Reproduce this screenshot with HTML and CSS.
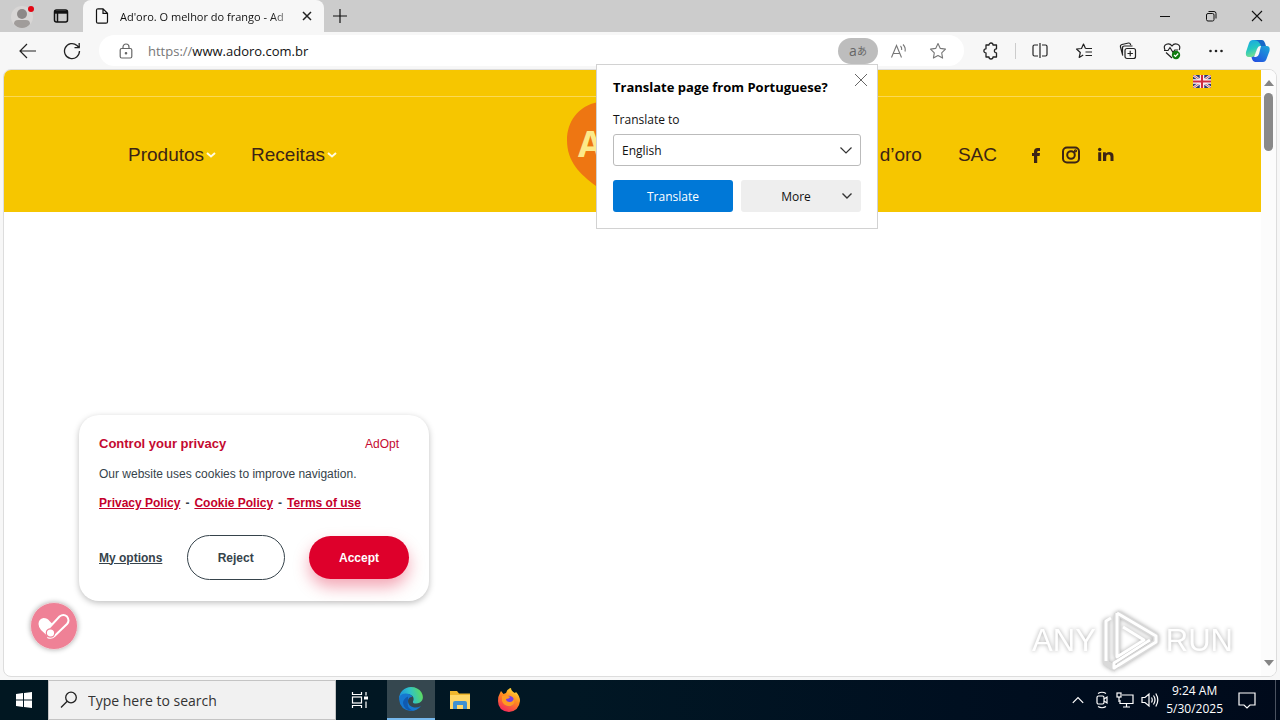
FILE: index.html
```html
<!DOCTYPE html>
<html lang="en">
<head>
<meta charset="utf-8">
<title>Ad'oro. O melhor do frango</title>
<link rel="stylesheet" href="styles.css">
</head>
<body>
<div class="browser">
<header class="tabs">
  <button class="tab-tool profile" aria-label="Profile">
    <svg width="24" height="26" viewBox="0 0 24 26"><circle cx="12" cy="14" r="11" fill="#d8d6d5"/><circle cx="12" cy="11" r="5" fill="#8d8988"/><path d="M4 21q0-4 4-4h8q4 0 4 4q-3 4-8 4t-8-4z" fill="#a09c9a"/><circle cx="21" cy="6" r="3" fill="#e30613"/></svg>
  </button>
  <button class="tab-tool" aria-label="Tab actions">
    <svg width="16" height="16" viewBox="0 0 16 16" fill="none" stroke="#111" stroke-width="1.5"><rect x="1.5" y="2" width="13" height="12" rx="2"/><path d="M1.5 4.2h13" stroke-width="3"/><path d="M4.5 5v9"/></svg>
  </button>
  <div class="tab">
    <svg width="14" height="16" viewBox="0 0 14 16" fill="none" stroke="#111" stroke-width="1.2"><path d="M3 .8h5l4.500 4.500v8.400q0 1.500-1.500 1.500H3q-1.500 0-1.500-1.500V2.300Q1.500.8 3 .8zM8 .8v4.500h4.500"/></svg>
    <span class="tab-title">Ad'oro. O melhor do frango - Ad</span>
    <button class="plain" aria-label="Close tab"><svg width="10" height="10" viewBox="0 0 10 10" stroke="#222" stroke-width="1.5"><path d="M1 1l8 8M9 1L1 9"/></svg></button>
  </div>
  <button class="plain new-tab" aria-label="New tab"><svg width="14" height="14" viewBox="0 0 14 14" stroke="#111" stroke-width="1.2"><path d="M7 0v14M0 7h14"/></svg></button>
  <div class="window-buttons">
    <button aria-label="Minimize"><svg width="12" height="12" viewBox="0 0 12 12" stroke="#111"><path d="M1 6.500h10"/></svg></button>
    <button aria-label="Restore"><svg width="12" height="12" viewBox="0 0 12 12" fill="none" stroke="#111"><rect x="1.500" y="3.500" width="7.500" height="7.500" rx="1.500"/><path d="M3.500 1.500h5.500q2 0 2 2v5"/></svg></button>
    <button aria-label="Close"><svg width="12" height="12" viewBox="0 0 12 12" stroke="#111" stroke-width="1.1"><path d="M1 1l10 10M11 1L1 11"/></svg></button>
  </div>
</header>

<div class="toolbar">
  <button class="plain back" aria-label="Back"><svg width="18" height="16" viewBox="0 0 18 16" fill="none" stroke="#222" stroke-width="1.2"><path d="M8 1L1 8l7 7M1 8h16"/></svg></button>
  <button class="plain" aria-label="Refresh"><svg width="18" height="18" viewBox="0 0 18 18" fill="none" stroke="#222" stroke-width="1.3"><path d="M16.500 9A7.500 7.500 0 1 1 14 3.500l2 2M16.200 1v4.700h-4.700"/></svg></button>
  <div class="address">
    <svg width="14" height="16" viewBox="0 0 14 16" fill="none" stroke="#666" stroke-width="1.2"><rect x="1.200" y="5.500" width="11.600" height="9.500" rx="1.500"/><path d="M4 5.500V4a3 3 0 0 1 6 0v1.500"/><circle cx="7" cy="10.200" r=".7" fill="#666"/></svg>
    <span class="url"><span class="scheme">https://</span>www.adoro.com.br</span>
    <button class="translate-pill" aria-label="Translate page"><span>a</span><span class="kana">あ</span></button>
    <button class="plain" aria-label="Read aloud"><svg width="18" height="18" viewBox="0 0 18 18" fill="none" stroke="#777" stroke-width="1.1"><path d="M1.500 15.500L6.500 3.500l5 12M3.300 11.500h6.500M10.500 4q1.500 1.500 1.200 4M13 2.500q3 3 2 7"/></svg></button>
    <button class="plain star" aria-label="Add to favorites"><svg width="18" height="18" viewBox="0 0 18 18" fill="none" stroke="#777" stroke-width="1.100" stroke-linejoin="round"><path d="M9 1.500l2.300 4.900 5.200.7-3.800 3.700.9 5.300L9 13.600l-4.600 2.500.9-5.300L1.500 7.100l5.200-.7z"/></svg></button>
  </div>
  <div class="tools">
    <button aria-label="Extensions"><svg width="18" height="18" viewBox="0 0 18 18" fill="none" stroke="#222" stroke-width="1.300" stroke-linejoin="round"><path d="M4 3h3a2 2 0 0 1 4 0h3.500v3.800a2 2 0 0 0 0 4.200v4H11a2 2 0 0 1-4 0H4v-4a2.100 2.100 0 0 1 0-4.200z"/></svg></button>
    <i class="rule"></i>
    <button aria-label="Split screen"><svg width="18" height="18" viewBox="0 0 18 18" fill="none" stroke="#222" stroke-width="1.200"><path d="M7 3H3.500Q2 3 2 4.500v8Q2 14 3.500 14H7M11 3h3.500Q16 3 16 4.500v8q0 1.500-1.500 1.500H11M9 1v15"/></svg></button>
    <button aria-label="Favorites"><svg width="18" height="18" viewBox="0 0 18 18" fill="none" stroke="#222" stroke-width="1.200" stroke-linejoin="round"><path d="M10.500 6.500L8.500 2 6.500 6.500l-5 .5 3.800 3.500-1.100 5 4-2.400M10.500 6.500H17M10.500 10H17M10.500 13.500H17"/></svg></button>
    <button aria-label="Collections"><svg width="18" height="18" viewBox="0 0 18 18" fill="none" stroke="#222" stroke-width="1.200"><rect x="6" y="6.500" width="10.500" height="10" rx="2"/><path d="M11.200 8.800v5.400M8.500 11.500h5.400M3.500 12.500L1.500 5q-.5-2 1.500-2.500l6.500-1.500q1.700-.2 2 1.500l.2.500M4 13.500q-1-1-.5-2.500V6q0-2 2-2h8"/></svg></button>
    <button aria-label="Browser essentials"><svg width="18" height="18" viewBox="0 0 18 18" fill="none" stroke="#222" stroke-width="1.200"><path d="M2 8Q0 3.500 3.500 2.200 7 1 9 4q2-3 5.500-1.800Q18 3.500 16.200 8M3 10.500l6 5.500M1 8.500h4L7 5.500l3 5 1.800-2.500H15"/><circle cx="13" cy="13" r="4.200" fill="#107c10" stroke="none"/><path d="M11 13l1.500 1.500 2.700-3" stroke="#fff"/></svg></button>
    <button aria-label="Settings and more"><svg width="18" height="18" viewBox="0 0 18 18" fill="#222"><circle cx="3.500" cy="9" r="1.300"/><circle cx="9" cy="9" r="1.300"/><circle cx="14.500" cy="9" r="1.300"/></svg></button>
    <button aria-label="Copilot"><svg width="26" height="24" viewBox="0 0 26 24"><defs><linearGradient id="cpA" x1="0" y1="0" x2=".4" y2="1"><stop offset="0" stop-color="#1aa2e8"/><stop offset=".55" stop-color="#25c8c0"/><stop offset="1" stop-color="#7fe08a"/></linearGradient><linearGradient id="cpB" x1="1" y1="0" x2=".2" y2="1"><stop offset="0" stop-color="#1ba8d8"/><stop offset="1" stop-color="#2350e0"/></linearGradient></defs><path d="M8 1h8q2 0 3 3l1 3h-4q-2 0-3 3l-2 6q-1 2-4 2H4q-4 0-3-5L4 4q1-3 4-3z" fill="url(#cpA)"/><path d="M9 1h8q2 0 3 3l1 3h-5q-2-6-7-6z" fill="#1768c8"/><path d="M18 23h-8q-2 0-3-3l-.500-2q3 0 4-3l2-6q1-2 4-2h5q4 0 3 5l-3 8q-1 3-3.500 3z" fill="url(#cpB)"/><path d="M16 7h-1q-2 0-3 3l-3 8h2q2 0 3-3z" fill="#f7f7f7"/></svg></button>
  </div>
</div>

<div class="frame">
  <main class="page">
    <div class="topbar">
      <svg width="18" height="13" viewBox="0 0 18 13" role="img" aria-label="English"><rect width="18" height="13" fill="#30386f"/><path d="M0 0l18 13M18 0L0 13" stroke="#eee" stroke-width="2.500"/><path d="M0 0l18 13M18 0L0 13" stroke="#c8374a" stroke-width=".8"/><path d="M9 0v13M0 6.500h18" stroke="#fff" stroke-width="4.500"/><path d="M9 0v13M0 6.500h18" stroke="#cf2b40" stroke-width="2.200"/></svg>
    </div>
    <nav class="nav">
      <div class="nav-left">
        <a href="#">Produtos<svg width="10" height="6" viewBox="0 0 10 6" fill="none" stroke="#fffbe0" stroke-width="2"><path d="M1 1l4 3.500L9 1"/></svg></a>
        <a href="#">Receitas<svg width="10" height="6" viewBox="0 0 10 6" fill="none" stroke="#fffbe0" stroke-width="2"><path d="M1 1l4 3.500L9 1"/></svg></a>
      </div>
      <svg class="brand" width="132" height="106" viewBox="0 0 132 106"><path d="M31 0C11 4 0 20 0 38C0 60 13 72 29 84Q48 96 66 106Q84 96 103 84C119 72 132 60 132 38C132 20 121 4 101 0Q66 -8 31 0z" fill="#ee7612"/><text x="11" y="55" class="brand-text">A</text></svg>
      <div class="nav-right">
        <a href="#">d’oro</a>
        <a href="#">SAC</a>
        <div class="social">
          <a href="#" aria-label="Facebook"><svg width="20" height="20" viewBox="0 0 20 20" fill="#3c2415"><path d="M8 18v-7H6V8h2V6.500Q8 3 11.500 3H14v2.900h-1.600q-1.200 0-1.200 1.200V8H14l-.4 3h-2.400v7z"/></svg></a>
          <a href="#" aria-label="Instagram"><svg width="20" height="20" viewBox="0 0 20 20" fill="none" stroke="#3c2415" stroke-width="2"><rect x="2" y="2.500" width="16" height="15" rx="4"/><circle cx="10" cy="10" r="3.800"/><circle cx="14.500" cy="5.800" r=".6"/></svg></a>
          <a href="#" aria-label="LinkedIn"><svg width="20" height="20" viewBox="0 0 20 20" fill="#3c2415"><circle cx="3.700" cy="4.500" r="1.700"/><path d="M2.200 7.300h3V16h-3zM7 7.300h2.800v1.200Q10.800 7 13 7q4.500 0 4.500 4.200V16h-3v-4.200q0-2.200-2-2.200-2.300 0-2.300 2.400v4H7z"/></svg></a>
        </div>
      </div>
    </nav>

    <section class="consent">
      <div class="consent-head"><h2>Control your privacy</h2><span>AdOpt</span></div>
      <p>Our website uses cookies to improve navigation.</p>
      <div class="policies"><a href="#">Privacy Policy</a><span>-</span><a href="#">Cookie Policy</a><span>-</span><a href="#">Terms of use</a></div>
      <div class="consent-actions"><a href="#">My options</a><button class="reject">Reject</button><button class="accept">Accept</button></div>
    </section>
    <button class="consent-badge" aria-label="Cookie preferences"><svg width="34" height="30" viewBox="0 0 34 30"><path d="M1.500 13q0-5 5-6 4 0 6 3l3 3-5 12L4 19q-2.500-3-2.500-6z" fill="#fff"/><path d="M9.500 19.500L22.500 5.500q4-3 7.500 0 3 4 0 7.500L17.500 25q-3 3-7 1" fill="#ef8196" stroke="#fff" stroke-width="2"/><circle cx="13.500" cy="22" r="4.200" fill="#fff" stroke="#ef8196" stroke-width="1.200"/></svg></button>

    <div class="watermark"><span>ANY</span>
      <svg width="62" height="64" viewBox="0 0 62 64" fill="none" stroke-linejoin="round"><g stroke="#d9d9d9" stroke-width="6"><path d="M17 4v44M17 4l39 23v6L18 57M6 11v43l10 6"/></g><g stroke="#fff" stroke-width="3"><path d="M17 4v44l27-17L23 18M17 4l39 23v6L14 59v-5L50 31M11 9l-5 3v40"/></g></svg>
      <span>RUN</span></div>
  </main>
  <div class="scrollbar" aria-hidden="true">
    <svg width="10" height="6" viewBox="0 0 10 6" fill="#858585"><path d="M5 0l5 6H0z"/></svg>
    <div class="thumb"></div>
    <svg class="down" width="10" height="6" viewBox="0 0 10 6" fill="#858585"><path d="M0 0h10L5 6z"/></svg>
  </div>
</div>

<section class="translate" aria-label="Translate">
  <button class="plain dismiss" aria-label="Close"><svg width="14" height="14" viewBox="0 0 14 14" stroke="#666"><path d="M1 1l12 12M13 1L1 13"/></svg></button>
  <h1>Translate page from Portuguese?</h1>
  <label for="lang">Translate to</label>
  <div class="select-wrap"><select id="lang"><option>English</option></select><svg width="12" height="7" viewBox="0 0 12 7" fill="none" stroke="#333" stroke-width="1.200"><path d="M.5.5L6 6 11.500.5"/></svg></div>
  <div class="translate-actions"><button class="primary">Translate</button><button class="more"><span>More</span><svg width="10" height="6" viewBox="0 0 10 6" fill="none" stroke="#333" stroke-width="1.400"><path d="M.5.5L5 5 9.500.5"/></svg></button></div>
</section>
</div>

<footer class="taskbar">
  <button class="start" aria-label="Start"><svg width="16" height="16" viewBox="0 0 16 16" fill="#fff"><path d="M0 2l7-1v6.500H0zM8 1l8-1v7.500H8zM0 8.500h7V15l-7-1zM8 8.500h8V16l-8-1z"/></svg></button>
  <label class="search"><svg width="18" height="18" viewBox="0 0 18 18" fill="none" stroke="#222" stroke-width="1.300"><circle cx="11" cy="6.500" r="5.300"/><path d="M7.200 10.300L1 16.500"/></svg><input type="text" placeholder="Type here to search" aria-label="Type here to search"></label>
  <button class="task" aria-label="Task view"><svg width="18" height="16" viewBox="0 0 18 16" fill="none" stroke="#fff" stroke-width="1.200"><path d="M1.500 0v2.500h9V0M1.500 16v-2.500h9V16M15 0v3.500M15 9.500V16"/><rect x="1.500" y="5" width="9" height="6"/><path d="M13 6h4" stroke-width="3"/></svg></button>
  <button class="task active" aria-label="Microsoft Edge"><svg width="24" height="24" viewBox="0 0 24 24"><defs><linearGradient id="edA" x1="0" y1=".6" x2="1" y2=".4"><stop offset="0" stop-color="#1a8fe0"/><stop offset=".5" stop-color="#2fc2c8"/><stop offset="1" stop-color="#5fdc5a"/></linearGradient></defs><path d="M0 12A12 12 0 0 1 12 0q7 0 10.500 5.500Q25 10 23 13.500q-2 3-6 3-3.500 0-3-2 1.500-3-.500-5.500Q10 6 5 7.500 1 9 0 12z" fill="url(#edA)"/><path d="M0 12q0-5 6.500-5.500 5 0 7 3.500-4-.500-4.500 4 0 5 6 6.500 3.500.500 7-1.500Q18 24 12 24 1 23 0 12z" fill="#1678d0"/><path d="M9 13.500q-2 7.500 5 10.300Q5 24 4 16q0-4 5-6.500z" fill="#105ab0"/></svg></button>
  <button class="task" aria-label="File Explorer"><svg width="22" height="20" viewBox="0 0 22 20"><path d="M1 1h7l2 2.500h11V19H1z" fill="#f0b72d"/><path d="M1 5h20v14H1z" fill="#ffd767"/><path d="M4 19v-6q0-2 2-2h10q2 0 2 2v6h-4v-4H8v4z" fill="#3f91d0"/></svg></button>
  <button class="task" aria-label="Firefox"><svg width="24" height="24" viewBox="0 0 24 24"><defs><linearGradient id="ff" x1=".8" y1="0" x2=".3" y2="1"><stop offset="0" stop-color="#ffe53b"/><stop offset=".45" stop-color="#ff8a1f"/><stop offset="1" stop-color="#f5275c"/></linearGradient></defs><path d="M3 5l1-2 2.500 3L9 5q1-4 5-5 0 3 4 5l1-1q4 4 4 9-1 10-11 11Q1 23 1 13q0-5 2-8z" fill="url(#ff)"/><circle cx="12" cy="13" r="5.200" fill="#7a3fe0"/><path d="M5 8q4-2 8 1-1 2-4 2 0 3 4 3 3 0 4-4 2 6-3 8-7 1-9-5z" fill="#ff9a22"/></svg></button>
  <div class="tray">
    <svg width="12" height="8" viewBox="0 0 12 8" fill="none" stroke="#fff" stroke-width="1.200"><path d="M.8 6.800L6 1.500l5.200 5.300"/></svg>
    <svg width="14" height="18" viewBox="0 0 14 18" fill="none" stroke="#fff" stroke-width="1.200"><rect x="2" y="5" width="7" height="8" rx="1.500"/><path d="M9 8l3-2v6l-3-2M3 2.500Q7 0 11 2.500M3 15.500q4 2.500 8 0"/></svg>
    <svg width="18" height="16" viewBox="0 0 18 16" fill="none" stroke="#fff" stroke-width="1.200"><path d="M6 3h11v8.500H4V8M10.500 11.500V15M7 15h7"/><rect x="1" y="1" width="4" height="4"/><path d="M3 5v5"/></svg>
    <svg width="18" height="16" viewBox="0 0 18 16" fill="none" stroke="#fff" stroke-width="1.200"><path d="M1 5.500h3L8 2v12l-4-3.500H1zM10.500 5.500q1.500 2.500 0 5M12.500 3.500q3 4.500 0 9M14.800 1.500q4 6.500 0 13"/></svg>
    <time><span>9:24 AM</span><span>5/30/2025</span></time>
    <svg class="notice" width="18" height="17" viewBox="0 0 18 17" fill="none" stroke="#fff" stroke-width="1.200"><path d="M1 1h16v12h-5l-3 3-3-3H1z"/></svg>
  </div>
</footer>
</body>
</html>
```

FILE: styles.css
```css
* { box-sizing: border-box; }
body { margin: 0; height: 100vh; display: flex; flex-direction: column; background: #f7f7f7; color: #111; font-family: "Open Sans", "Noto Sans", sans-serif; font-size: 12px; overflow: hidden; }
button { font: inherit; color: inherit; border: 0; padding: 0; background: none; display: flex; align-items: center; justify-content: center; }
svg { display: block; flex: none; }
h1, h2, p { margin: 0; }
.browser { position: relative; flex: 1; min-height: 0; display: flex; flex-direction: column; }

.tabs { height: 32px; display: flex; background: #ccc; }
.tab-tool { width: 39px; padding-right: 6px; }
.tab-tool.profile { width: 44px; padding: 0; }
.tab { width: 241px; background: #f7f7f7; border-radius: 8px 8px 0 0; display: flex; align-items: center; gap: 11px; padding: 0 12px; }
.tab-title { flex: 1; font-size: 11px; white-space: nowrap; mask-image: linear-gradient(90deg, #000 88%, rgba(0, 0, 0, .3)); }
.new-tab { margin-left: 9px; }
.window-buttons { margin-left: auto; display: flex; }
.window-buttons button { width: 46px; }

.toolbar { height: 37px; display: flex; align-items: center; padding: 0 9px 0 19px; }
.back { margin-right: 26px; }
.address { flex: 1; height: 31px; margin: 0 18px; padding: 0 17px 0 20px; border-radius: 16px; background: #fff; display: flex; align-items: center; font-size: 14px; }
.url { flex: 1; margin-left: 15px; font-size: 13px; }
.scheme { color: #777; }
.translate-pill { width: 40px; height: 26px; border-radius: 13px; background: #bdbdbd; color: #666; font-size: 14px; margin-right: 12px; }
.kana { font-family: "Noto Sans CJK JP", sans-serif; font-size: 10px; }
.star { margin-left: 21px; }
.tools { display: flex; align-items: center; gap: 26px; }
.rule { width: 1px; height: 16px; background: #ccc; margin: 0 -11px; }
.tools button:last-child { margin-left: -6px; }

.frame { flex: 1; min-height: 0; margin: 0 3px 3px; display: flex; overflow: hidden; border: 1px solid #ddd; border-radius: 8px; background: #fff; }
.page { position: relative; flex: 1; font-family: "Liberation Sans", Arial, sans-serif; }
.topbar { height: 27px; background: #f6c600; border-bottom: 1px solid #fbd955; display: flex; justify-content: flex-end; padding: 5px 50px 0 0; }
.nav { height: 115px; background: #f6c600; display: grid; grid-template-columns: 1fr 132px 1fr; align-items: center; padding: 0 124px; }
.nav a { color: #3c2415; text-decoration: none; font-size: 19px; display: flex; align-items: center; gap: 2px; }
.nav-left { display: flex; gap: 35px; }
.nav-right { display: flex; gap: 36px; justify-content: flex-end; padding-right: 21px; }
.social { display: flex; gap: 15px; margin-left: -7px; }
.brand-text { font: bold 36px "Open Sans", sans-serif; fill: #fce98a; }

.consent { position: absolute; left: 75px; bottom: 75px; width: 350px; padding: 19px 20px 21px; border-radius: 20px; background: #fff; box-shadow: 0 2px 6px rgba(0, 0, 0, .25); color: #36434b; font-size: 12px; line-height: 20px; }
.consent-head { display: flex; justify-content: space-between; padding-right: 10px; color: #c40a31; }
.consent-head h2 { font-size: 13px; }
.consent p { margin-top: 10px; }
.policies { display: flex; gap: 5px; margin-top: 9px; font-weight: bold; }
.policies a { color: #c4002b; }
.consent-actions { display: flex; align-items: center; justify-content: space-between; margin-top: 22px; font-weight: bold; }
.consent-actions a { color: #36434b; }
.consent-actions button { height: 45px; width: 98px; border-radius: 23px; }
.reject { border: 1px solid #36434b; }
.consent-actions .accept { width: 100px; height: 43px; background: #de002b; color: #fff; box-shadow: 0 8px 16px rgba(222, 0, 43, .35); }
.consent-badge { position: absolute; left: 26px; bottom: 26px; width: 48px; height: 48px; border-radius: 50%; background: #ef8196; border: 1px solid #ead6d9; box-shadow: 0 0 5px rgba(0, 0, 0, .3); }
.watermark { position: absolute; right: 28px; bottom: 3px; display: flex; align-items: center; gap: 4px; font: 31px "Liberation Sans", sans-serif; color: #fff; filter: drop-shadow(0 0 2px #aaa); }

.scrollbar { width: 15px; background: #fcfcfc; display: flex; flex-direction: column; align-items: center; padding: 10px 0; }
.thumb { width: 9px; height: 58px; margin-top: 7px; border-radius: 5px; background: #8a8a8a; }
.down { margin-top: auto; }

.translate { position: absolute; right: 402px; top: 64px; width: 282px; padding: 13px 16px 16px; background: #fff; border: 1px solid #d2d2d2; display: flex; flex-direction: column; }
.dismiss { position: absolute; right: 9px; top: 8px; }
.translate h1 { font-size: 13px; line-height: 18px; color: #000; }
.translate label { margin-top: 15px; line-height: 18px; }
.select-wrap { display: grid; margin-top: 5px; align-items: center; }
.select-wrap > * { grid-area: 1 / 1; }
.select-wrap svg { justify-self: end; margin-right: 9px; pointer-events: none; }
select { appearance: none; height: 32px; border: 1px solid #bbb; border-radius: 3px; background: #fff; font: inherit; color: #111; padding: 0 8px; }
.translate-actions { display: grid; grid-template-columns: 1fr 1fr; gap: 8px; margin-top: 14px; }
.translate-actions button { height: 32px; border-radius: 3px; }
.primary { background: #0078d7; color: #fff; }
.more { background: #eee; padding: 0 9px; }
.more span { flex: 1; }

.taskbar { height: 40px; display: flex; background: linear-gradient(90deg, #011721 0%, #011724 45%, #000f20 75%, #000a1b 100%); color: #fff; }
.start { width: 48px; }
.search { width: 288px; border: 1px solid #c4c4c4; background: #f1f1f1; display: flex; align-items: center; padding-left: 11px; gap: 10px; }
.search input { flex: 1; min-width: 0; border: 0; padding: 0; background: none; font: 14px "Open Sans", sans-serif; outline: 0; }
.search input::placeholder { color: #333; opacity: 1; }
.task { width: 49px; }
.search + .task { width: 51px; padding-right: 3px; }
.task.active { width: 48px; background: #35474f; border-bottom: 2px solid #76b9ed; }
.tray { margin-left: auto; display: flex; align-items: center; gap: 7px; margin-right: 4px; border-right: 1px solid #4a5260; }
.tray > svg:first-child { margin-right: 4px; }
.tray time { display: flex; flex-direction: column; align-items: center; line-height: 18px; font-size: 12px; }
.notice { margin: 0 19px 0 8px; }
```
